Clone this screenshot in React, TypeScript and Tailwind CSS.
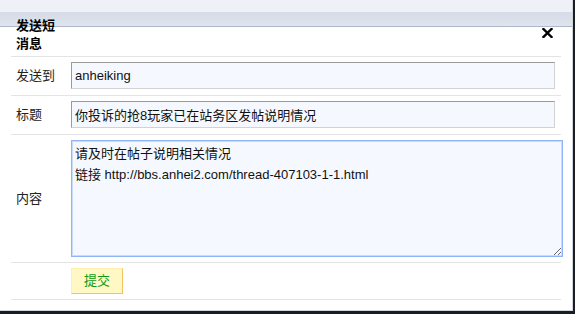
const fieldClass =
  "h-[27px] w-[484px] border border-t-[#9a9a9a] border-l-[#9a9a9a] border-r-[#d2d2d2] border-b-[#d2d2d2] bg-[#f5f9ff] px-[3px] text-[13px] text-[#111] outline-none";

const FormRow = ({ label, children, tall }: { label?: string; children: React.ReactNode; tall?: boolean }) => (
  <div className={`flex items-center border-t border-[#e4e4e4] ${tall ? "pt-[5px] pb-[5px]" : "pt-[5px] pb-[6px]"}`}>
    <div className="w-[60px] shrink-0 pl-[5px] text-[13px] text-[#222]">{label}</div>
    <div className="flex-1">{children}</div>
  </div>
);

const App = () => {
  return (
    <div className="h-[314px] w-[575px] overflow-hidden bg-[#1b1d20] font-['Liberation_Sans','Noto_Sans_CJK_SC',sans-serif]">
      <div className="h-[311px] w-[573px] border-r border-b border-[#cfd5de] bg-[linear-gradient(to_bottom,#eef2f8_0px,#eef2f8_12px,#d5dbe7_12px,#dfe4ed_26px,#aeb7c7_26px,#aeb7c7_27px,#ffffff_27px)]">
        {/* Header */}
        <div className="flex items-start justify-between pt-[17px] pl-[16px] pr-[19px]">
          <h3 className="w-[42px] text-[13px] font-bold leading-[18px] text-black">发送短消息</h3>
          <button className="mt-[11px] text-black" aria-label="close">
            <svg width="11" height="10" viewBox="0 0 11 10">
              <path d="M1.5 1 L9.5 9 M9.5 1 L1.5 9" stroke="#000" strokeWidth="2.4" strokeLinecap="square" />
            </svg>
          </button>
        </div>

        {/* Form */}
        <div className="mt-[3px] ml-[11px] w-[550px] border-b border-[#e4e4e4]">
          <FormRow label="发送到">
            <input className={fieldClass} defaultValue="anheiking" />
          </FormRow>
          <FormRow label="标题">
            <input className={fieldClass} defaultValue="你投诉的抢8玩家已在站务区发帖说明情况" />
          </FormRow>
          <FormRow label="内容" tall>
            <textarea
              className="block h-[117px] w-[492px] border border-[#8fb4f7] bg-[#f5f9ff] px-[3px] pt-[2px] text-[13px] leading-[21px] text-[#111] shadow-[inset_0_0_0_1px_#c9dbfb] outline-none"
              defaultValue={"请及时在帖子说明相关情况\n链接 http://bbs.anhei2.com/thread-407103-1-1.html"}
            />
          </FormRow>
          <FormRow tall>
            <button className="h-[26px] w-[52px] border border-t-[#fff0b0] border-l-[#fff0b0] border-r-[#f2c25c] border-b-[#f2c25c] bg-[#fff8c4] text-[13px] text-[#139a13]">
              提交
            </button>
          </FormRow>
        </div>
      </div>
    </div>
  );
};

export default App;
